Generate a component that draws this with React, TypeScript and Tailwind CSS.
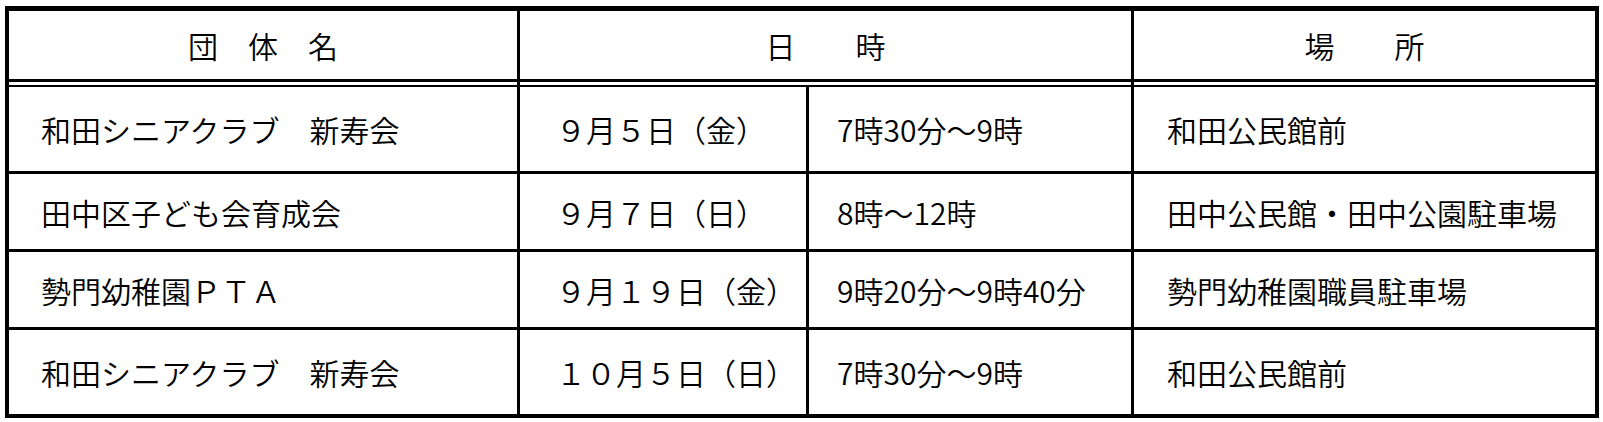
import React from "react";

const rows = [
  { name: "和田シニアクラブ　新寿会", date: "９月５日（金）", time: "7時30分～9時", place: "和田公民館前", h: "h-[84px]" },
  { name: "田中区子ども会育成会", date: "９月７日（日）", time: "8時～12時", place: "田中公民館・田中公園駐車場", h: "h-[75px]" },
  { name: "勢門幼稚園ＰＴＡ", date: "９月１９日（金）", time: "9時20分～9時40分", place: "勢門幼稚園職員駐車場", h: "h-[75px]" },
  { name: "和田シニアクラブ　新寿会", date: "１０月５日（日）", time: "7時30分～9時", place: "和田公民館前", h: "h-[84px]" },
];

export default function App() {
  return (
    <div
      className="w-[1603px] h-[422px] bg-white text-black pt-[6px] pl-[5px]"
      style={{ fontFamily: '"Noto Sans CJK JP", "Noto Sans", sans-serif' }}
    >
      <div className="w-[1594px] border-[4px] border-t-[5px] border-black text-[30px] leading-none font-[350]">
        {/* header */}
        <div className="flex h-[71px] border-b-[3px] border-black">
          <div className="w-[511px] border-r-[3px] border-black flex items-center justify-center">団　体　名</div>
          <div className="w-[614px] border-r-[3px] border-black flex items-center justify-center">日　　時</div>
          <div className="flex-1 flex items-center justify-center">場　　所</div>
        </div>
        {/* double line gap */}
        <div className="flex h-[3px]">
          <div className="w-[511px] border-r-[3px] border-black" />
          <div className="w-[614px] border-r-[3px] border-black" />
          <div className="flex-1" />
        </div>
        <div className="h-[2px] bg-black" />
        {rows.map((r, i) => (
          <div
            key={i}
            className={`flex ${r.h} ${i < rows.length - 1 ? "border-b-[3px] border-black box-content" : ""}`}
          >
            <div className="w-[511px] border-r-[3px] border-black flex items-center pl-[32px] whitespace-nowrap">{r.name}</div>
            <div className="w-[289px] border-r-[3px] border-black flex items-center pl-[36px] whitespace-nowrap">{r.date}</div>
            <div className="w-[325px] border-r-[3px] border-black flex items-center pl-[28px] whitespace-nowrap">{r.time}</div>
            <div className="flex-1 flex items-center pl-[33px] whitespace-nowrap">{r.place}</div>
          </div>
        ))}
      </div>
    </div>
  );
}
